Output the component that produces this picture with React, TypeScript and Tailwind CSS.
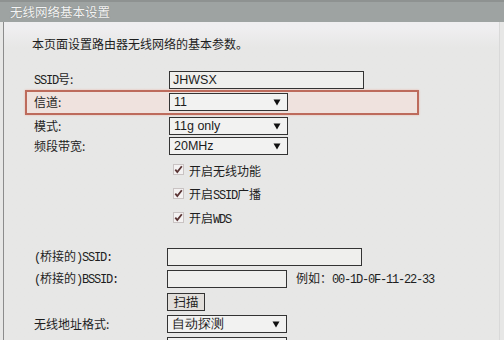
import React from "react";

const mono = "font-['Liberation_Mono','DejaVu_Sans_Mono',monospace] text-[12px] tracking-[-1.2px]";
const latin = "font-['Liberation_Sans',Arial,sans-serif]";

function Arrow() {
  return (
    <svg width="8" height="7" viewBox="0 0 8 7" className="mr-[6px] shrink-0">
      <path d="M0.5 0.5H7.5L4 6.5Z" fill="#111" />
    </svg>
  );
}

function Select({ value, w }: { value: string; w: string }) {
  return (
    <div
      className={`flex h-[18px] ${w} items-center justify-between border border-[#333] bg-[#f2f2f1] pl-[4px] text-[12.5px] text-[#1c1c1c] ${latin}`}
    >
      <span className="leading-none">{value}</span>
      <Arrow />
    </div>
  );
}

function Input({ value, w }: { value?: string; w: string }) {
  return (
    <div
      className={`flex h-[18px] ${w} items-center border border-[#333] bg-[#efefed] pl-[3px] text-[12.5px] text-[#1c1c1c] ${latin}`}
    >
      <span className="leading-none">{value}</span>
    </div>
  );
}

function Check() {
  return (
    <svg width="11" height="11" viewBox="0 0 11 11" className="shrink-0">
      <rect x="0.5" y="0.5" width="10" height="10" fill="#f4f2f2" stroke="#c9c3c3" />
      <path d="M2.3 5.6L4.3 8L8.8 2.2" fill="none" stroke="#5a3434" strokeWidth="1.8" />
    </svg>
  );
}

function CheckRow({ children }: { children: React.ReactNode }) {
  return (
    <div className="flex h-[24px] items-center pl-[169px]">
      <div className="-mt-[4px]">
        <Check />
      </div>
      <div className="ml-[5px] text-[12px] text-[#1e1e1e]">{children}</div>
    </div>
  );
}

export default function App() {
  return (
    <div className="h-[340px] w-[504px] overflow-hidden bg-[#e7e7e6] font-['Noto_Sans_CJK_SC',sans-serif] text-[#1e1e1e]">
      {/* title bar */}
      <div className="flex h-[22px] items-center border-t-2 border-[#8e9291] bg-[#9ea3a2] pl-[10px]">
        <span className="text-[12.5px] leading-none text-[#f4f4f4] [text-shadow:0_0_1px_#6f7372]">
          无线网络基本设置
        </span>
      </div>
      <div className="ml-[3px] mr-[4px] h-[318px] border-l border-r border-[#8c8c8c] border-r-[#d9d9d9] bg-gradient-to-b from-[#efeef0] from-[2%] to-[#e7e7e6] to-[8%]">
        {/* intro */}
        <div className="pl-[28px] pt-[14px] text-[12px] leading-[16px]">本页面设置路由器无线网络的基本参数。</div>

        {/* SSID */}
        <div className="mt-[18px] flex h-[20px] items-center">
          <div className="w-[165px] pl-[30px] text-[12px]">
            <span className={mono}>SSID</span>号:
          </div>
          <Input value="JHWSX" w="w-[195px]" />
        </div>

        {/* channel highlighted */}
        <div className="ml-[21px] flex h-[25px] w-[394px] items-start border-2 border-[#bd6b5c] bg-[#efe2de] shadow-[0_0_2px_#e9b7ab]">
          <div className="flex h-[19px] w-[142px] items-center pl-[7px] text-[12px]">信道:</div>
          <div className="mt-[1px]">
            <Select value="11" w="w-[119px]" />
          </div>
        </div>

        {/* mode */}
        <div className="mt-[2px] flex h-[18px] items-center">
          <div className="w-[165px] pl-[30px] text-[12px]">模式:</div>
          <Select value="11g only" w="w-[119px]" />
        </div>

        {/* bandwidth */}
        <div className="mt-[2px] flex h-[18px] items-center">
          <div className="w-[165px] pl-[30px] text-[12px]">频段带宽:</div>
          <Select value="20MHz" w="w-[119px]" />
        </div>

        <div className="mt-[4px]">
          <CheckRow>开启无线功能</CheckRow>
          <CheckRow>
            开启<span className={mono}>SSID</span>广播
          </CheckRow>
          <CheckRow>
            开启<span className={mono}>WDS</span>
          </CheckRow>
        </div>

        {/* bridged SSID */}
        <div className="mt-[17px] flex h-[18px] items-center">
          <div className="w-[163px] pl-[30px] text-[12px]">
            <span className={mono}>(</span>桥接的<span className={mono}>)SSID:</span>
          </div>
          <Input w="w-[195px]" />
        </div>

        {/* bridged BSSID */}
        <div className="mt-[4px] flex h-[18px] items-center">
          <div className="w-[163px] pl-[30px] text-[12px]">
            <span className={mono}>(</span>桥接的<span className={mono}>)BSSID:</span>
          </div>
          <Input w="w-[120px]" />
          <div className="ml-[9px] text-[12px]">
            例如：<span className={mono}>00-1D-0F-11-22-33</span>
          </div>
        </div>

        {/* scan */}
        <div className="mt-[5px] flex h-[18px] items-center pl-[163px]">
          <div className="flex h-[18px] w-[38px] items-center justify-center border border-[#333] bg-[#e2dfdb] text-[12.5px]">
            扫描
          </div>
        </div>

        {/* mac format */}
        <div className="mt-[4px] flex h-[18px] items-center">
          <div className="w-[163px] pl-[30px] text-[12px]">无线地址格式:</div>
          <Select value="自动探测" w="w-[120px]" />
        </div>

        <div className="mt-[4px] flex h-[18px] items-center">
          <div className="w-[163px] pl-[30px] text-[12px]"></div>
          <Select value="" w="w-[120px]" />
        </div>
      </div>
    </div>
  );
}
